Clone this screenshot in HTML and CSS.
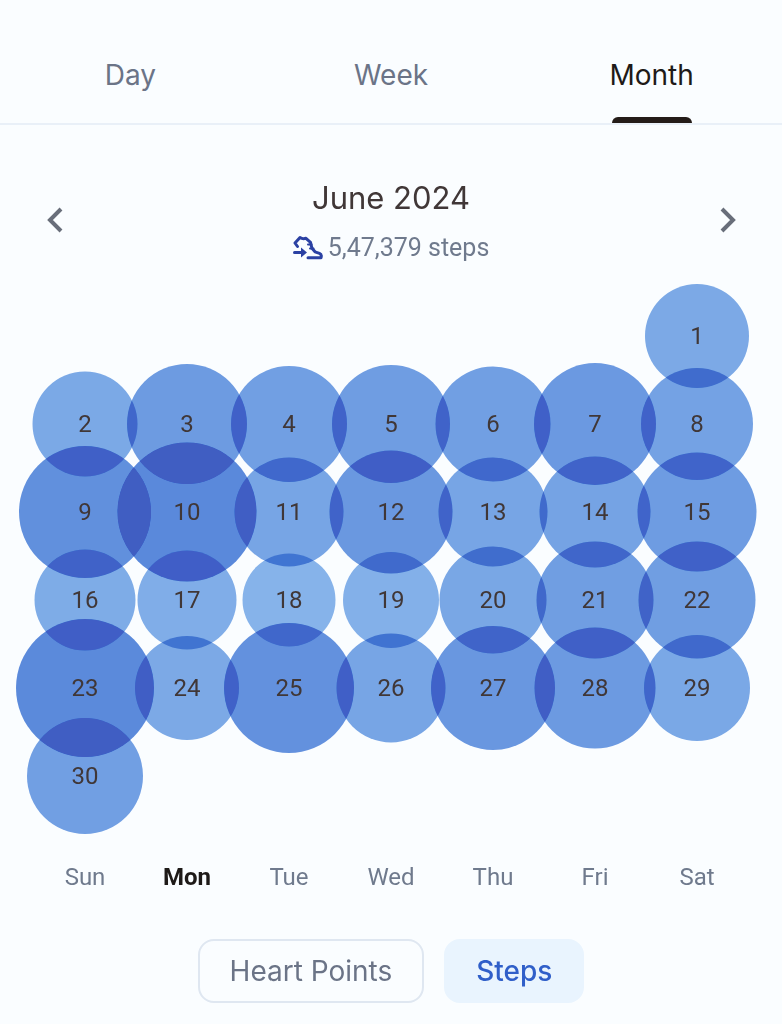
FILE: index.html
```html
<!DOCTYPE html>
<html lang="en">
<head>
    <meta charset="UTF-8">
    <meta name="viewport" content="width=device-width, initial-scale=1.0">
    <title>Steps</title>
    <link rel="stylesheet" href="styles.css">
</head>
<body>
    <nav class="tabs">
        <button class="tab">Day</button>
        <button class="tab">Week</button>
        <button class="tab active">Month</button>
    </nav>

    <main>
        <header class="month">
            <button class="arrow" aria-label="Previous month">
                <svg width="20" height="28" viewBox="0 0 20 28"><path d="M17 3 6 14l11 11"/></svg>
            </button>
            <div class="summary">
                <h1>June 2024</h1>
                <p class="total">
                    <svg class="shoe" width="30" height="26" viewBox="0 0 30 26">
                        <path d="M4.500 11.500 2 8 7 2.500q2.500 1.800 6 .8l4.500 4 1.500 6 3 3.500 4.500 1.500q2.500 1 1.500 4.500H15"/>
                        <path d="M15 9.500h3.500M17 13.500h3.500" stroke-width="2"/>
                        <path d="M1.500 17.500h8"/>
                        <path class="head" d="M8 12.500l6 5-6 5z"/>
                    </svg>
                    5,47,379 steps
                </p>
            </div>
            <button class="arrow" aria-label="Next month">
                <svg width="20" height="28" viewBox="0 0 20 28"><path d="m4 3 11 11L4 25"/></svg>
            </button>
        </header>

        <div class="calendar"></div>

        <div class="weekdays">
            <span>Sun</span>
            <span class="today">Mon</span>
            <span>Tue</span>
            <span>Wed</span>
            <span>Thu</span>
            <span>Fri</span>
            <span>Sat</span>
        </div>

        <div class="filters">
            <button class="chip">Heart Points</button>
            <button class="chip selected">Steps</button>
        </div>
    </main>

    <script>
    // bubble size of every day, 1 to 30
    const sizes = [
        104,
        105, 120, 116, 118, 115, 122, 112,
        132, 139, 109, 123, 109, 111, 119,
        101, 99, 93, 96, 107, 117, 117,
        138, 104, 130, 109, 124, 121, 106,
        116
    ];
    const light = [137, 181, 234];
    const dark = [92, 138, 219];

    // more steps = darker blue
    function bubbleColor(size){
        const t = (size - 93) / (139 - 93);
        const rgb = light.map((c, i) => Math.round(c + (dark[i] - c) * t));
        return `rgb(${rgb.join(', ')})`;
    }

    let html = '';
    sizes.forEach((size, i) => {
        html += `
        <div class="day">
            <span class="bubble" style="width: ${size}px; height: ${size}px; background-color: ${bubbleColor(size)}"></span>
            <span class="number">${i + 1}</span>
        </div>`;
    });
    document.querySelector('.calendar').innerHTML = html;
    </script>
</body>
</html>
```
FILE: styles.css
```css
body{
    margin: 0;
    background-color: #fafdff;
    color: #403737;
    font-family: Roboto, Arial, sans-serif;
    font-size: 24px;
}
button{
    border: none;
    background-color: transparent;
    cursor: pointer;
}
.tabs{
    display: grid;
    grid-template-columns: repeat(3, 1fr);
    height: 123px;
    border-bottom: 2px solid #e9f0f8;
}
.tab{
    display: flex;
    flex-direction: column;
    align-items: center;
    justify-content: flex-end;
    gap: 23px;
    padding: 0;
    color: #6b7487;
    font-family: Inter, sans-serif;
    font-size: 28px;
    line-height: 38px;
}
.tab::after{
    content: '';
    width: 80px;
    height: 6px;
    border-radius: 6px 6px 0 0;
}
.tab.active{
    color: #1e1a18;
}
.tab.active::after{
    background-color: #241c18;
}
main{
    background-color: #fafdff;
    isolation: isolate;
}
.month{
    display: flex;
    align-items: center;
    justify-content: space-between;
    padding: 53px 44px 30px;
}
.arrow{
    display: flex;
    padding: 0;
}
.arrow svg{
    fill: none;
    stroke: #686e7a;
    stroke-width: 4;
}
.summary{
    text-align: center;
}
h1{
    margin: 0;
    font-family: Inter, sans-serif;
    font-size: 31px;
    font-weight: 400;
    line-height: 40px;
}
.total{
    display: flex;
    align-items: center;
    justify-content: center;
    gap: 5px;
    margin: 16px 0 0;
    color: #6f7a8d;
    font-size: 25px;
    line-height: 28px;
}
.shoe{
    fill: none;
    stroke: #2b41a3;
    stroke-width: 3;
    stroke-linejoin: round;
    stroke-linecap: round;
}
.shoe .head{
    fill: #2b41a3;
    stroke: none;
}
.calendar{
    position: relative;
    display: grid;
    grid-template-columns: repeat(7, 1fr);
    grid-auto-rows: 88px;
    padding: 0 34px;
}
/* keeps the overlaps from going too dark */
.calendar::after{
    content: '';
    position: absolute;
    inset: -20px 0;
    background-color: rgb(64, 94, 194);
    mix-blend-mode: lighten;
}
.day{
    position: relative;
    display: flex;
    align-items: center;
    justify-content: center;
}
.day:first-child{
    grid-column: 7;
}
.bubble{
    position: absolute;
    top: 50%;
    left: 50%;
    translate: -50% -50%;
    border-radius: 50%;
    mix-blend-mode: multiply;
}
.number{
    position: relative;
    z-index: 1;
}
.weekdays{
    display: grid;
    grid-template-columns: repeat(7, 1fr);
    padding: 41px 34px 0;
    color: #6f7a8d;
    line-height: 32px;
    text-align: center;
}
.today{
    color: #1e1a18;
    font-weight: bold;
}
.filters{
    display: flex;
    justify-content: center;
    gap: 20px;
    padding: 46px 0 20px;
}
.chip{
    padding: 0 30px;
    border: 2px solid #dfe7f1;
    border-radius: 16px;
    color: #6b7487;
    font-family: Inter, sans-serif;
    font-size: 28px;
    line-height: 60px;
}
.chip.selected{
    border-color: #e9f4fe;
    background-color: #e9f4fe;
    color: #305fc9;
    font-weight: 500;
}
```
